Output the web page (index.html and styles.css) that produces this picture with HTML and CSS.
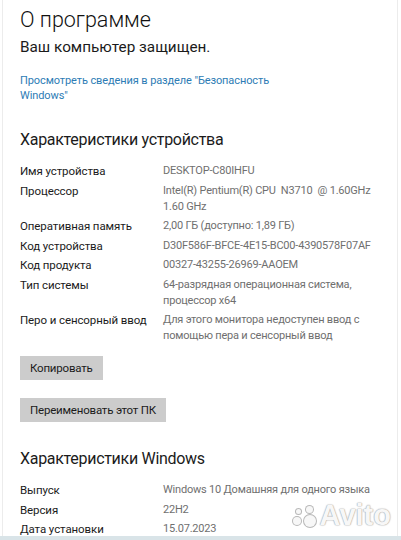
FILE: index.html
```html
<!DOCTYPE html>
<html lang="ru">
<head>
    <meta charset="UTF-8">
    <title>О программе</title>
    <link rel="stylesheet" href="styles.css">
</head>
<body>
<div class="window">
    <div class="content">
        <h1>О программе</h1>
        <p class="status">Ваш компьютер защищен.</p>
        <a class="link" href="#">Просмотреть сведения в разделе "Безопасность<br>Windows"</a>

        <h2>Характеристики устройства</h2>
        <div class="specs">
            <div class="label">Имя устройства</div>
            <div class="value">DESKTOP-C80IHFU</div>
            <div class="label">Процессор</div>
            <div class="value">Intel(R) Pentium(R) CPU &nbsp;N3710 &nbsp;@ 1.60GHz<br>1.60 GHz</div>
            <div class="label">Оперативная память</div>
            <div class="value">2,00 ГБ (доступно: 1,89 ГБ)</div>
            <div class="label">Код устройства</div>
            <div class="value">D30F586F-BFCE-4E15-BC00-4390578F07AF</div>
            <div class="label">Код продукта</div>
            <div class="value">00327-43255-26969-AAOEM</div>
            <div class="label">Тип системы</div>
            <div class="value">64-разрядная операционная система,<br>процессор x64</div>
            <div class="label">Перо и сенсорный ввод</div>
            <div class="value">Для этого монитора недоступен ввод с<br>помощью пера и сенсорный ввод</div>
        </div>

        <button class="btn btn-copy">Копировать</button>
        <button class="btn btn-rename">Переименовать этот ПК</button>

        <h2 class="win-title">Характеристики Windows</h2>
        <div class="specs">
            <div class="label">Выпуск</div>
            <div class="value">Windows 10 Домашняя для одного языка</div>
            <div class="label">Версия</div>
            <div class="value">22H2</div>
            <div class="label">Дата установки</div>
            <div class="value">15.07.2023</div>
        </div>
    </div>
    <div class="watermark">
        <span class="dots"><i class="d1"></i><i class="d2"></i><i class="d3"></i><i class="d4"></i></span>Avito
    </div>
</div>
<div class="taskbar"></div>
</body>
</html>
```

FILE: styles.css
```css
* { box-sizing: border-box; }
body {
    margin: 0;
    background: #ffffff;
    font-family: Roboto, 'Noto Sans', sans-serif;
    color: #1b1b1b;
}

.window {
    position: relative;
    height: 536px;
    overflow: hidden;
    border-left: 1px solid #ececec;
    border-right: 1px solid #ececec;
    margin: 0 3px 0 2px;
}

.content {
    padding: 5px 0 0 17px;
}

h1 {
    margin: 0;
    font-size: 21.5px;
    font-weight: 300;
    line-height: 30px;
    color: #111;
}

.status {
    margin: 3px 0 0;
    font-size: 15.3px;
    line-height: 18px;
}

.link {
    display: block;
    margin-top: 17px;
    font-size: 11px;
    letter-spacing: -0.1px;
    line-height: 15px;
    color: #2d7cb5;
    text-decoration: none;
    white-space: nowrap;
}

h2 {
    margin: 25px 0 0;
    font-size: 16px;
    letter-spacing: -0.3px;
    font-weight: 400;
    line-height: 24px;
    color: #1b1b1b;
}

.specs {
    display: grid;
    grid-template-columns: 143px 230px;
    row-gap: 3.5px;
    margin-top: 11px;
    line-height: 16px;
    white-space: nowrap;
}

.label {
    font-size: 11.5px;
    letter-spacing: -0.1px;
    color: #1b1b1b;
}

.value {
    font-size: 11px;
    letter-spacing: -0.2px;
    color: #6f6f6f;
}

.btn {
    display: block;
    border: none;
    background: #cccccc;
    font-family: inherit;
    font-size: 11.5px;
    letter-spacing: -0.2px;
    color: #1b1b1b;
    height: 24px;
    padding: 0 10px;
    white-space: nowrap;
}

.btn-copy { margin-top: 12px; }
.btn-rename { margin-top: 18px; }

.win-title { margin-top: 25px; }

.watermark {
    position: absolute;
    right: 6px;
    bottom: 4px;
    display: flex;
    align-items: center;
    gap: 3px;
    font-family: 'Liberation Sans', sans-serif;
    font-weight: bold;
    font-size: 29px;
    color: #f7f7f7;
    text-shadow: 0 0 1px #aaaaaa, 0 0 1px #b0b0b0, 0 0 2px #c4c4c4;
}

.dots {
    position: relative;
    width: 26px;
    height: 24px;
}

.dots i {
    position: absolute;
    border-radius: 50%;
    background: #f7f7f7;
    box-shadow: 0 0 0 1px #b8b8b8;
}

.d1 { width: 12px; height: 12px; left: 13px; top: 11px; }
.d2 { width: 8px; height: 8px; left: 2px; top: 13px; }
.d3 { width: 7px; height: 7px; left: 15px; top: 2px; }
.d4 { width: 5px; height: 5px; left: 5px; top: 5px; }

.taskbar {
    height: 4px;
    background: #d9e4e8;
}
```
